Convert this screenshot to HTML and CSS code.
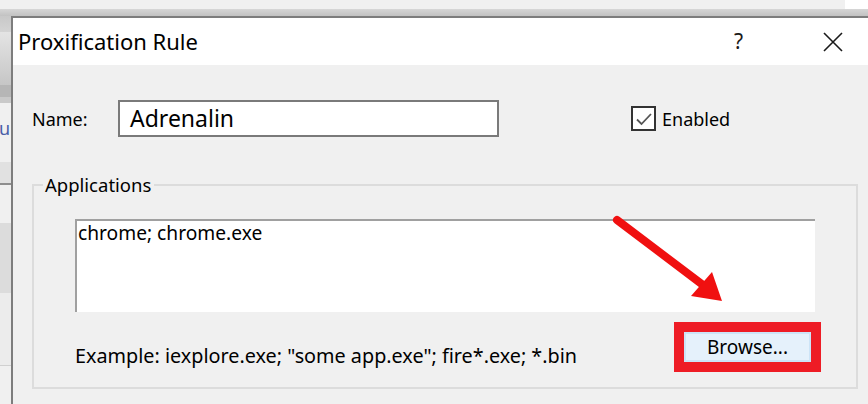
FILE: index.html
```html
<!DOCTYPE html>
<html>
<head>
<meta charset="utf-8">
<link rel="stylesheet" href="styles.css">
</head>
<body>
<div class="screen">
  <div class="top">
    <div class="top-light"><div class="top-white"></div></div>
    <div class="top-shadow"></div>
  </div>
  <div class="main">
    <div class="bgwin">
      <div class="b b1"></div>
      <div class="b b2"></div>
      <div class="b b3"></div>
      <div class="b b4"></div>
      <div class="b b5"><span class="frag">u</span></div>
      <div class="b b6"></div>
      <div class="b b7"></div>
      <div class="b b8"></div>
      <div class="b b9"></div>
      <div class="b b10"></div>
      <div class="b b11"></div>
      <div class="b b12"></div>
    </div>
    <div class="dialog">
      <div class="titlebar">
        <span class="title">Proxification Rule</span>
        <span class="help">?</span>
        <span class="close">
          <svg width="22" height="22" viewBox="0 0 22 22"><path d="M2 2 L20 20 M20 2 L2 20" stroke="#1a1a1a" stroke-width="1.6" fill="none"/></svg>
        </span>
      </div>
      <div class="body">
        <div class="row-name">
          <span class="lbl">Name:</span>
          <div class="input">Adrenalin</div>
          <div class="check">
            <span class="box"><svg width="20" height="20" viewBox="0 0 20 20"><path d="M3 10.5 L7.5 15 L17 5" stroke="#555" stroke-width="1.8" fill="none"/></svg></span>
            <span class="check-lbl">Enabled</span>
          </div>
        </div>
        <fieldset class="group">
          <legend class="legend">Applications</legend>
          <div class="apps">chrome; chrome.exe</div>
          <div class="bottom-row">
            <span class="example">Example: iexplore.exe; "some app.exe"; fire*.exe; *.bin</span>
            <div class="highlight"><div class="btn">Browse...</div></div>
          </div>
        </fieldset>
      </div>
    </div>
  </div>
  <svg class="arrow" width="868" height="404" viewBox="0 0 868 404">
    <line x1="617" y1="220" x2="703" y2="285" stroke="#f01010" stroke-width="8" stroke-linecap="round"/>
    <polygon points="722,301 691,296 712,272" fill="#f01010"/>
  </svg>
</div>
</body>
</html>
```
FILE: styles.css
```css
html, body {
  margin: 0;
  padding: 0;
}
body {
  width: 868px;
  height: 404px;
  overflow: hidden;
  background: #f0f0f0;
  font-family: "Noto Sans", "Open Sans", sans-serif;
  color: #000;
}
.screen {
  position: relative;
  width: 868px;
  height: 404px;
  display: flex;
  flex-direction: column;
}
.top {
  height: 16px;
  display: flex;
  flex-direction: column;
}
.top-light {
  height: 9px;
  background: #f0f0f0;
  display: flex;
  justify-content: flex-end;
}
.top-white {
  width: 23px;
  background: #ffffff;
}
.top-shadow {
  height: 7px;
  background: linear-gradient(#d6d6d6, #c2c2c2);
}
.main {
  flex: 1;
  display: flex;
  min-height: 0;
}
.bgwin {
  width: 11px;
  display: flex;
  flex-direction: column;
  overflow: hidden;
}
.b { flex: none; }
.b1 { height: 16px; background: linear-gradient(#c8c8c8, #d4d4d4); }
.b2 { height: 53px; background: linear-gradient(#e4e4e4, #c6c6c6); }
.b3 { height: 12px; background: #b6b6b6; }
.b4 { height: 6px; background: #c9c9c9; }
.b5 { height: 59px; background: #f0f0f0; position: relative; }
.frag {
  position: absolute;
  left: -1px;
  top: 15px;
  font-size: 18px;
  line-height: 20px;
  color: #4a5fa8;
}
.b6 { height: 21px; background: #e1e1e1; }
.b7 { height: 2px; background: #8e8e8e; }
.b8 { height: 38px; background: #f0f0f0; }
.b9 { height: 70px; background: #dcdcdc; }
.b10 { height: 72px; background: #ececec; }
.b11 { height: 1px; background: #d0d0d0; }
.b12 { height: 60px; background: #f0f0f0; }

.dialog {
  flex: 1;
  display: flex;
  flex-direction: column;
  border-left: 2px solid #7d7d7d;
  border-top: 2px solid #7d7d7d;
  background: #f0f0f0;
}
.titlebar {
  height: 47px;
  background: #ffffff;
  display: flex;
  align-items: center;
  padding-left: 5px;
}
.title {
  font-size: 22px;
  line-height: 47px;
  color: #000;
  flex: 1;
}
.help {
  font-size: 21px;
  line-height: 47px;
  color: #1a1a1a;
  width: 14px;
  margin-right: 74px;
}
.close {
  display: flex;
  margin-right: 24px;
}
.body {
  flex: 1;
  display: flex;
  flex-direction: column;
  min-height: 0;
}
.row-name {
  margin-top: 35px;
  height: 37px;
  display: flex;
  align-items: center;
  padding-left: 19px;
}
.lbl {
  width: 86px;
  font-size: 18px;
}
.input {
  width: 367px;
  height: 33px;
  border: 2px solid #7a7a7a;
  background: #fff;
  font-size: 23px;
  line-height: 33px;
  padding-left: 10px;
}
.check {
  margin-left: 132px;
  display: flex;
  align-items: center;
  gap: 6px;
}
.box {
  width: 21px;
  height: 21px;
  border: 2px solid #333;
  background: #fff;
  display: flex;
  align-items: center;
  justify-content: center;
}
.check-lbl {
  font-size: 18px;
}
.group {
  flex: 1;
  margin: 36px 10px 15px 19px;
  padding: 0;
  border: 2px solid #dcdcdc;
  min-width: 0;
  display: flex;
  flex-direction: column;
}
.legend {
  margin-left: 9px;
  padding: 0 3px 0 2px;
  font-size: 18.5px;
  line-height: 24px;
}
.apps {
  margin: 22px 41px 0 41px;
  height: 91px;
  background: #fff;
  border-top: 2px solid #a0a0a0;
  border-left: 2px solid #a0a0a0;
  font-size: 19.2px;
  line-height: 24px;
  padding-left: 1px;
}
.bottom-row {
  margin: 10px 35px 0 41px;
  display: flex;
  justify-content: space-between;
  align-items: flex-end;
}
.example {
  font-size: 19.8px;
  line-height: 24px;
  margin-bottom: 4px;
}
.highlight {
  border: 10px solid #ee1c25;
  display: flex;
}
.btn {
  width: 123px;
  height: 26px;
  border: 2px solid #cce4f7;
  background: #e5f1fb;
  font-size: 19px;
  line-height: 26px;
  text-align: center;
}
.arrow {
  position: absolute;
  left: 0;
  top: 0;
  pointer-events: none;
}
```
